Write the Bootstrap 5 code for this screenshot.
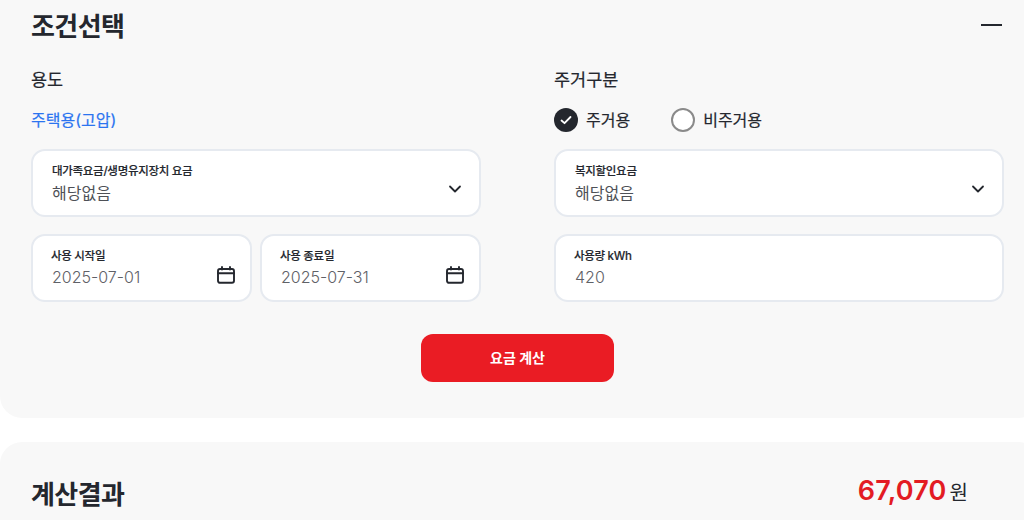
<!DOCTYPE html>
<html lang="ko">
<head>
<meta charset="utf-8">
<link href="https://cdn.jsdelivr.net/npm/bootstrap@5.3.0/dist/css/bootstrap.min.css" rel="stylesheet">
<style>
html,body{height:520px;overflow:hidden;background:#fff}
body{font-family:Inter,"Noto Sans CJK KR",sans-serif;color:#24272e}
.sheet{background:#f8f8f8;padding:0 36px 36px 31px;border-radius:0 0 22px 22px;margin-right:-16px}
.sheet-next{background:#f8f8f8;margin-top:24px;margin-right:-16px;padding:32px 36px 0 31px;border-radius:22px 22px 0 0;height:78px}
.head-row{height:52px}
.sheet-title{font-size:26px;font-weight:700;line-height:40px;letter-spacing:-.6px;margin:0;padding-top:1px}
.dash{width:21px;height:2px;background:#24272e;margin-right:2px;margin-top:-2px}
.two-col{gap:73px;margin-top:12px}
.side{flex:0 0 450px;width:450px}
.sub-label{font-size:17.5px;line-height:32px;font-weight:400;height:32px;margin:0;-webkit-text-stroke:.2px currentColor}
.opt-row{height:37px;margin-top:5px;margin-bottom:11px;font-size:16px;font-weight:400;line-height:24px;-webkit-text-stroke:.2px currentColor}
.usage{color:#2b74f0}
.radio-on,.radio-off{width:24px;height:24px;border-radius:50%;flex:none}
.radio-on{background:#24272e}
.radio-off{border:2px solid #8a8a8a;background:#fff}
.field{background:#fff;border:2px solid #e6eaf0;border-radius:14px;height:68px;padding:11px 19px 9px;margin-bottom:17px;position:relative}
.field-top{font-size:11.5px;font-weight:500;line-height:18px;letter-spacing:-.3px;-webkit-text-stroke:.15px currentColor}
.field-date .field-top{margin-left:-1px}
.field-val{font-size:16px;line-height:26px;color:#6f7177}
.field-date .field-val{font-weight:300;margin-top:-1px;color:#5f6167}
.field-sel .field-val{color:#4e5157}
.field-ico{position:absolute}
.ico-chev{right:17px;top:31px}
.ico-cal{right:15px;top:30px}
.field-half{flex:1 1 0;min-width:0}
.pay-btn{width:193px;height:48px;background:#ea1c24;color:#fff;border:0;border-radius:12px;font-size:14px;font-weight:700;padding:0 0 2px}
.pay-wrap{margin-top:15px;width:973px}
.total{font-size:27px;font-weight:600;color:#e31b23;line-height:36px;letter-spacing:.2px}
.won{font-size:20px;line-height:36px;font-weight:400;margin-left:3px}
.total-wrap{padding-right:20px;margin-right:16px;margin-top:-1px}
</style>
</head>
<body>
<section class="sheet">
  <div class="d-flex justify-content-between align-items-center head-row">
    <h2 class="sheet-title">조건선택</h2>
    <span class="dash"></span>
  </div>
  <div class="d-flex two-col">
    <div class="side">
      <p class="sub-label">용도</p>
      <div class="opt-row d-flex align-items-center usage">주택용(고압)</div>
      <div class="field field-sel">
        <div class="field-top">대가족요금/생명유지장치 요금</div>
        <div class="field-val">해당없음</div>
        <svg class="field-ico ico-chev" width="14" height="14" viewBox="0 0 14 14" fill="none" stroke="#24272e" stroke-width="1.8" stroke-linecap="round" stroke-linejoin="round"><path d="M2 4.5 7 9.5 12 4.5"/></svg>
      </div>
      <div class="d-flex gap-2">
        <div class="field field-half field-date">
          <div class="field-top">사용 시작일</div>
          <div class="field-val">2025-07-01</div>
          <svg class="field-ico ico-cal" width="18" height="18" viewBox="0 0 18 18" fill="none" stroke="#24272e" stroke-width="1.9" stroke-linecap="round"><rect x="1" y="3" width="16" height="13.8" rx="2"/><path d="M1 7.3H17M5 1V3.5M13 1V3.5"/></svg>
        </div>
        <div class="field field-half field-date">
          <div class="field-top">사용 종료일</div>
          <div class="field-val">2025-07-31</div>
          <svg class="field-ico ico-cal" width="18" height="18" viewBox="0 0 18 18" fill="none" stroke="#24272e" stroke-width="1.9" stroke-linecap="round"><rect x="1" y="3" width="16" height="13.8" rx="2"/><path d="M1 7.3H17M5 1V3.5M13 1V3.5"/></svg>
        </div>
      </div>
    </div>
    <div class="side">
      <p class="sub-label">주거구분</p>
      <div class="opt-row d-flex align-items-center">
        <span class="radio-on d-flex align-items-center justify-content-center"><svg width="14" height="14" viewBox="0 0 14 14" fill="none" stroke="#fff" stroke-width="1.8" stroke-linecap="round" stroke-linejoin="round"><path d="M2.5 7.5 5.5 10.2 11.5 4"/></svg></span>
        <span class="ms-2">주거용</span>
        <span class="radio-off" style="margin-left:41px"></span>
        <span class="ms-2">비주거용</span>
      </div>
      <div class="field field-sel">
        <div class="field-top">복지할인요금</div>
        <div class="field-val">해당없음</div>
        <svg class="field-ico ico-chev" width="14" height="14" viewBox="0 0 14 14" fill="none" stroke="#24272e" stroke-width="1.8" stroke-linecap="round" stroke-linejoin="round"><path d="M2 4.5 7 9.5 12 4.5"/></svg>
      </div>
      <div class="field field-date">
        <div class="field-top">사용량 kWh</div>
        <div class="field-val">420</div>
      </div>
    </div>
  </div>
  <div class="d-flex justify-content-center pay-wrap">
    <button type="button" class="btn pay-btn">요금 계산</button>
  </div>
</section>
<section class="sheet-next d-flex justify-content-between align-items-start">
  <h2 class="sheet-title">계산결과</h2>
  <div class="d-flex align-items-baseline total-wrap"><span class="total">67,070</span><span class="won">원</span></div>
</section>
<script src="https://cdn.jsdelivr.net/npm/bootstrap@5.3.0/dist/js/bootstrap.bundle.min.js"></script>
</body>
</html>
